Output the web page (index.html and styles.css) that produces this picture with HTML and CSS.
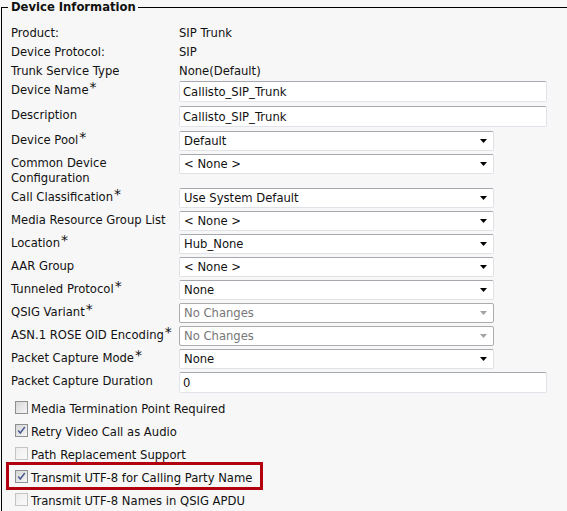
FILE: index.html
```html
<!DOCTYPE html>
<html>
<head>
<meta charset="utf-8">
<link rel="stylesheet" href="styles.css">
</head>
<body>
<fieldset class="device">
  <legend class="legend">Device Information</legend>
  <div class="info">
    <div class="row"><span class="label">Product:</span><span class="value">SIP Trunk</span></div>
    <div class="row"><span class="label">Device Protocol:</span><span class="value">SIP</span></div>
    <div class="row"><span class="label">Trunk Service Type</span><span class="value">None(Default)</span></div>
  </div>
  <div class="form">
    <div class="field field-input">
      <span class="label">Device Name<sup class="req">*</sup></span>
      <input class="text" type="text" value="Callisto_SIP_Trunk">
    </div>
    <div class="field field-input">
      <span class="label">Description</span>
      <input class="text" type="text" value="Callisto_SIP_Trunk">
    </div>
    <div class="field field-select">
      <span class="label">Device Pool<sup class="req">*</sup></span>
      <div class="select"><span>Default</span><svg class="arrow" width="7" height="4" viewBox="0 0 7 4"><path d="M0 0h7L3.5 4z"/></svg></div>
    </div>
    <div class="field field-tall">
      <span class="label">Common Device<br>Configuration</span>
      <div class="select"><span>&lt; None &gt;</span><svg class="arrow" width="7" height="4" viewBox="0 0 7 4"><path d="M0 0h7L3.5 4z"/></svg></div>
    </div>
    <div class="field field-select">
      <span class="label">Call Classification<sup class="req">*</sup></span>
      <div class="select"><span>Use System Default</span><svg class="arrow" width="7" height="4" viewBox="0 0 7 4"><path d="M0 0h7L3.5 4z"/></svg></div>
    </div>
    <div class="field field-select">
      <span class="label">Media Resource Group List</span>
      <div class="select"><span>&lt; None &gt;</span><svg class="arrow" width="7" height="4" viewBox="0 0 7 4"><path d="M0 0h7L3.5 4z"/></svg></div>
    </div>
    <div class="field field-select">
      <span class="label">Location<sup class="req">*</sup></span>
      <div class="select"><span>Hub_None</span><svg class="arrow" width="7" height="4" viewBox="0 0 7 4"><path d="M0 0h7L3.5 4z"/></svg></div>
    </div>
    <div class="field field-select">
      <span class="label">AAR Group</span>
      <div class="select"><span>&lt; None &gt;</span><svg class="arrow" width="7" height="4" viewBox="0 0 7 4"><path d="M0 0h7L3.5 4z"/></svg></div>
    </div>
    <div class="field field-select">
      <span class="label">Tunneled Protocol<sup class="req">*</sup></span>
      <div class="select"><span>None</span><svg class="arrow" width="7" height="4" viewBox="0 0 7 4"><path d="M0 0h7L3.5 4z"/></svg></div>
    </div>
    <div class="field field-select">
      <span class="label">QSIG Variant<sup class="req">*</sup></span>
      <div class="select disabled"><span>No Changes</span><svg class="arrow" width="7" height="4" viewBox="0 0 7 4"><path d="M0 0h7L3.5 4z"/></svg></div>
    </div>
    <div class="field field-select">
      <span class="label">ASN.1 ROSE OID Encoding<sup class="req">*</sup></span>
      <div class="select disabled"><span>No Changes</span><svg class="arrow" width="7" height="4" viewBox="0 0 7 4"><path d="M0 0h7L3.5 4z"/></svg></div>
    </div>
    <div class="field field-select">
      <span class="label">Packet Capture Mode<sup class="req">*</sup></span>
      <div class="select"><span>None</span><svg class="arrow" width="7" height="4" viewBox="0 0 7 4"><path d="M0 0h7L3.5 4z"/></svg></div>
    </div>
    <div class="field field-last">
      <span class="label">Packet Capture Duration</span>
      <input class="text" type="text" value="0">
    </div>
  </div>
  <div class="checks">
    <div class="check"><span class="box"></span><span>Media Termination Point Required</span></div>
    <div class="check"><span class="box"><svg width="11" height="11" viewBox="0 0 11 11"><path d="M2.2 5.6l2.1 2.4L8.8 2" fill="none" stroke="#4b5c92" stroke-width="1.5"/></svg></span><span>Retry Video Call as Audio</span></div>
    <div class="check"><span class="box off"></span><span>Path Replacement Support</span></div>
    <div class="check highlighted"><span class="box"><svg width="11" height="11" viewBox="0 0 11 11"><path d="M2.2 5.6l2.1 2.4L8.8 2" fill="none" stroke="#4b5c92" stroke-width="1.5"/></svg></span><span>Transmit UTF-8 for Calling Party Name</span><span class="mark"></span></div>
    <div class="check"><span class="box off"></span><span>Transmit UTF-8 Names in QSIG APDU</span></div>
  </div>
</fieldset>
</body>
</html>
```
FILE: styles.css
```css
html, body {
  margin: 0;
  padding: 0;
  background: #f7f7f7;
  overflow: hidden;
}
body {
  width: 567px;
  height: 511px;
  font-family: "DejaVu Sans", Verdana, sans-serif;
  font-size: 11.6px;
  color: #111;
}
.device {
  margin: 0 0 0 1px;
  padding: 0 0 0 9px;
  border: 1px solid #000;
  border-right: 0;
  width: 556px;
  min-width: 0;
}
.legend {
  margin-left: -3px;
  padding: 0 2px 0 3px;
  font-weight: bold;
  font-size: 11.6px;
  line-height: 15px;
}
.info {
  padding-top: 8px;
}
.row {
  display: grid;
  grid-template-columns: 168px auto;
  box-sizing: border-box;
  height: 19px;
  padding-top: 1px;
  line-height: 18px;
}
.form {
  margin-top: 1px;
}
.field {
  display: grid;
  grid-template-columns: 168px auto;
  align-items: start;
  justify-content: start;
}
.field-input { height: 25px; }
.field-select { height: 23px; }
.field-tall { height: 34px; }
.field-last { height: 24px; }
.label {
  padding-top: 2px;
  line-height: 15px;
  white-space: nowrap;
}
.req {
  font-size: 14px;
  line-height: 0;
  vertical-align: 2px;
  margin-left: 1px;
}
.text {
  box-sizing: border-box;
  width: 368px;
  height: 21px;
  margin: 0;
  padding: 0 3px;
  border: 1px solid #e0e4ea;
  border-top-color: #a6a9b0;
  border-radius: 2px;
  background: #fff;
  font: 11.6px "DejaVu Sans", Verdana, sans-serif;
  color: #111;
  outline: none;
}
.select {
  box-sizing: border-box;
  width: 315px;
  height: 20px;
  display: flex;
  align-items: center;
  justify-content: space-between;
  padding: 0 6px 0 4px;
  border: 1px solid #dfe2e6;
  border-top-color: #a6a9b0;
  border-radius: 2px;
  background: #fff;
}
.select .arrow { fill: #000; }
.select.disabled {
  border-color: #acacac;
  color: #777;
}
.select.disabled .arrow { fill: #a3a3a3; }
.checks {
  padding-left: 4px;
}
.check {
  position: relative;
  display: flex;
  align-items: center;
  gap: 3px;
  height: 23px;
  white-space: nowrap;
}
.check > span:nth-child(2) {
  padding-top: 2px;
}
.box {
  box-sizing: border-box;
  width: 13px;
  height: 13px;
  border: 1px solid #8e8f8f;
  background: linear-gradient(135deg, #d6d6d6, #f6f6f6);
  display: flex;
  align-items: center;
  justify-content: center;
}
.box.off {
  border-color: #c4c4c4;
  background: linear-gradient(135deg, #ececec, #fbfbfb);
}
.mark {
  position: absolute;
  left: -9px;
  top: -3px;
  width: 257px;
  height: 28px;
  box-sizing: border-box;
  border: 3px solid #b3000e;
}
```
